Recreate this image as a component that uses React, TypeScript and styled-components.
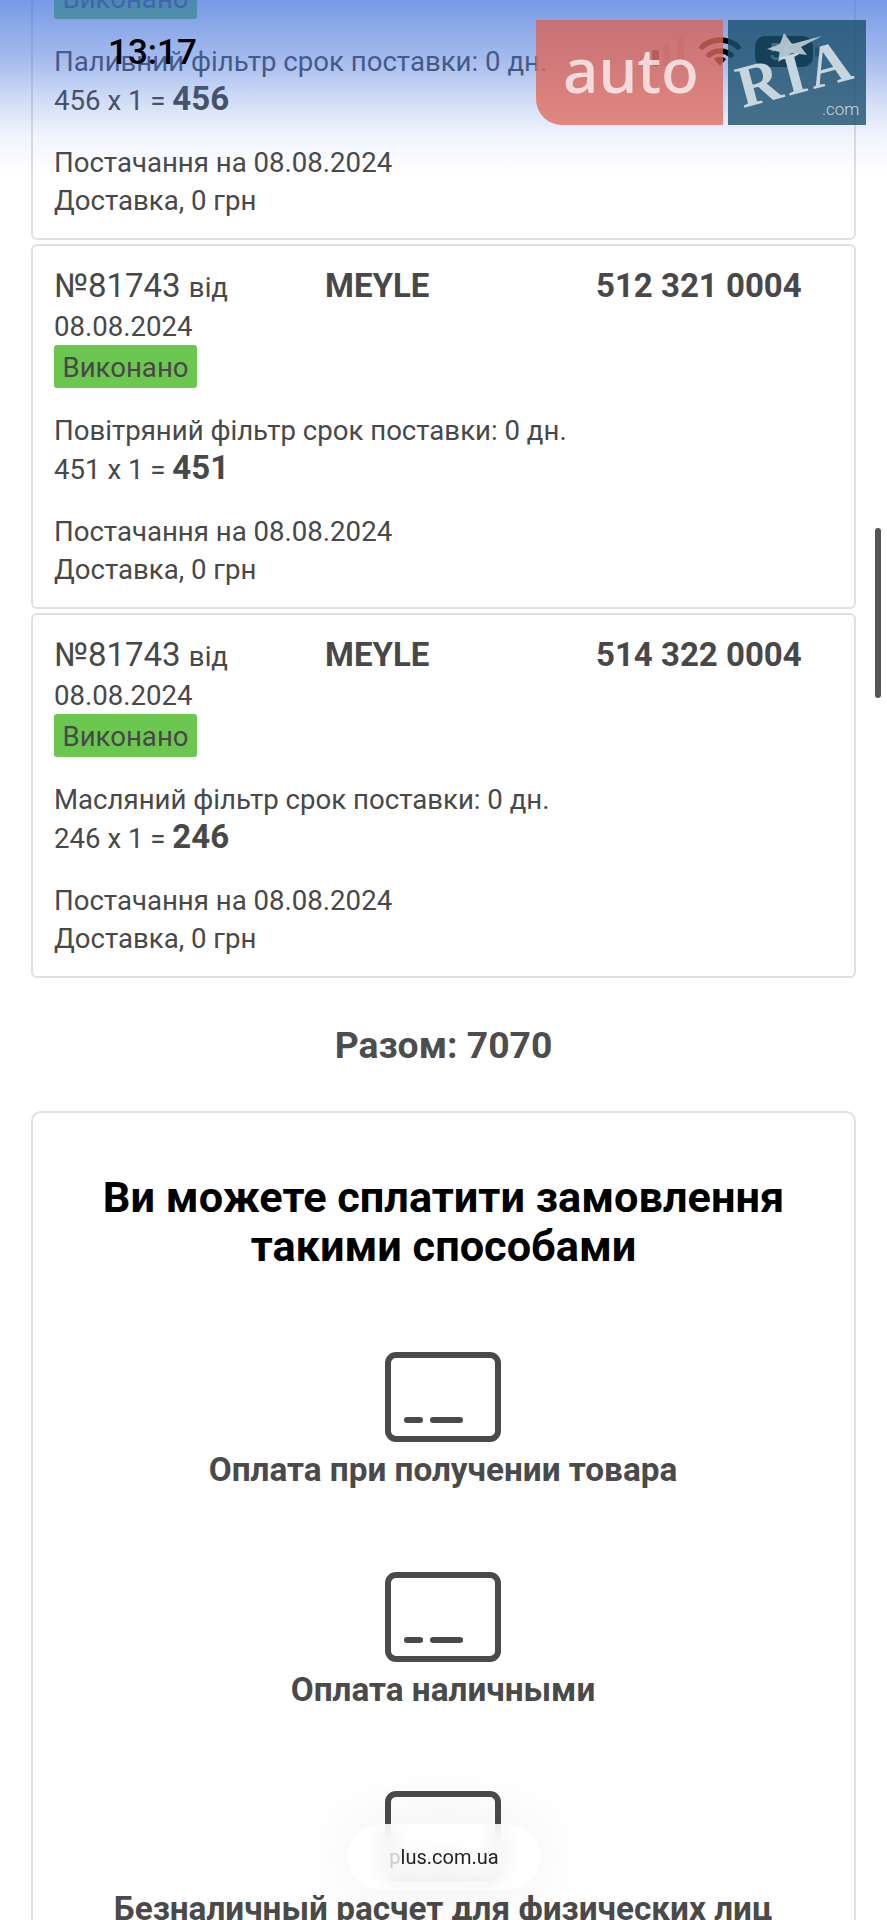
import styled, { createGlobalStyle } from "styled-components";

const GlobalStyle = createGlobalStyle`
  html, body {
    margin: 0;
    padding: 0;
    background: #fff;
    overflow: hidden;
  }
  * { box-sizing: border-box; }
`;

const Screen = styled.div`
  position: relative;
  width: 887px;
  height: 1920px;
  overflow: hidden;
  font-family: Roboto, "Noto Sans", sans-serif;
  color: #484848;
`;

const Content = styled.main`
  display: flex;
  flex-direction: column;
  gap: 4px;
  padding: 0 31px;
  margin-top: -125px;
`;

const OrderCard = styled.article`
  height: 365px;
  border: 2px solid #e0e0e0;
  border-radius: 6px;
  padding: 18px 21px 0;
  font-size: 27.6px;
  line-height: 38px;
`;

const OrderHead = styled.div`
  display: grid;
  grid-template-columns: 271px 271px 1fr;
  font-size: 33px;
  line-height: 44px;
`;

const Small = styled.span`
  font-size: 27.6px;
  line-height: 1;
`;

const Strong = styled.span`
  font-size: 33px;
  font-weight: 700;
  line-height: 1;
`;

const HeadStrong = styled.div`
  font-weight: 700;
`;

const OrderDate = styled.div`
  line-height: 36px;
  padding-top: 1px;
`;

const Status = styled.div`
  width: 143px;
  height: 43px;
  background: #6cc750;
  border-radius: 3px;
  text-align: center;
  line-height: 46px;
  margin-bottom: 24px;
`;

const Block = styled.div`
  margin-bottom: 24px;
`;

const PriceRow = styled.div`
  margin-top: 1px;
`;

const Total = styled.h2`
  margin: 41px 0 40px;
  text-align: center;
  font-size: 37.3px;
  line-height: 44px;
  font-weight: 700;
  color: #4d4d4d;
`;

const PayCard = styled.section`
  border: 2px solid #e0e0e0;
  border-radius: 10px;
  padding: 60px 10px 0;
  height: 900px;
`;

const PayTitle = styled.h1`
  margin: 0 0 81px;
  text-align: center;
  color: #000;
  font-size: 43.3px;
  line-height: 49px;
  font-weight: 700;
`;

const PayList = styled.div`
  display: flex;
  flex-direction: column;
  gap: 81.5px;
  padding-right: 1px;
`;

const PayItem = styled.div`
  display: flex;
  flex-direction: column;
  align-items: center;
  gap: 8px;
  font-size: 33.3px;
  line-height: 40px;
  font-weight: 700;
  color: #4a4a4a;
`;

const TopShade = styled.div`
  position: absolute;
  left: 0;
  right: 0;
  top: 0;
  height: 176px;
  background: linear-gradient(
    180deg,
    rgba(64, 112, 218, 0.71) 0%,
    rgba(64, 112, 218, 0.47) 34%,
    rgba(64, 112, 218, 0.24) 57%,
    rgba(64, 112, 218, 0.07) 78%,
    rgba(64, 112, 218, 0) 100%
  );
`;

const Clock = styled.div`
  position: absolute;
  left: 108px;
  top: 33px;
  font-size: 35px;
  line-height: 40px;
  font-weight: 500;
  color: #000;
`;

const StatusIcons = styled.svg`
  position: absolute;
  left: 630px;
  top: 30px;
`;

const BatteryLevel = styled.text`
  font-family: Roboto, sans-serif;
  font-size: 24px;
  font-weight: 500;
  fill: #d8dde0;
`;

const AutoLogo = styled.div`
  position: absolute;
  left: 536px;
  top: 20px;
  width: 187px;
  height: 105px;
  padding-left: 3px;
  border-bottom-left-radius: 26px;
  background: linear-gradient(180deg, rgba(216, 100, 90, 0.8), rgba(224, 110, 97, 0.8));
  color: rgba(255, 255, 255, 0.72);
  font-family: "Noto Sans", sans-serif;
  font-size: 62px;
  font-weight: 500;
  line-height: 98px;
  text-align: center;
`;

const RiaLogo = styled.svg`
  position: absolute;
  left: 728px;
  top: 20px;
`;

const RiaWord = styled.text`
  font-family: "Liberation Serif", serif;
  font-weight: 700;
  font-size: 60px;
  letter-spacing: 3px;
  fill: #c7d6de;
`;

const RiaCom = styled.text`
  font-family: Roboto, sans-serif;
  font-weight: 300;
  font-size: 17px;
  fill: #c7d6de;
`;

const Scrollbar = styled.div`
  position: absolute;
  right: 6px;
  top: 528px;
  width: 6px;
  height: 170px;
  border-radius: 3px;
  background: #555;
`;

const UrlPill = styled.div`
  position: absolute;
  left: 348px;
  top: 1824px;
  width: 192px;
  height: 66px;
  border-radius: 33px;
  background: rgba(255, 255, 255, 0.82);
  backdrop-filter: blur(10px);
  box-shadow: 0 0 70px rgba(0, 0, 0, 0.07);
  text-align: center;
  font-size: 20px;
  line-height: 66px;
  color: #222;
`;

const FadedLetter = styled.span`
  color: #ccc;
`;

function CardIcon() {
  return (
    <svg width="116" height="90" viewBox="0 0 116 90" fill="none">
      <rect x="3" y="3" width="110" height="84" rx="8" stroke="#4a4a4a" strokeWidth="6" />
      <rect x="19" y="65" width="19" height="6" rx="3" fill="#4a4a4a" />
      <rect x="45" y="65" width="33" height="6" rx="3" fill="#4a4a4a" />
    </svg>
  );
}

const ORDERS = [
  { article: "512 321 0004", name: "Повітряний фільтр", price: "451" },
  { article: "514 322 0004", name: "Масляний фільтр", price: "246" },
];

const PAYMENTS = ["Оплата при получении товара", "Оплата наличными", "Безналичный расчет для физических лиц"];

function Order({ article, name, price }: { article: string; name: string; price: string }) {
  return (
    <OrderCard>
      <OrderHead>
        <div>
          №81743 <Small>від</Small>
        </div>
        <HeadStrong>MEYLE</HeadStrong>
        <HeadStrong>{article}</HeadStrong>
      </OrderHead>
      <OrderDate>08.08.2024</OrderDate>
      <Status>Виконано</Status>
      <Block>
        <div>{name} срок поставки: 0 дн.</div>
        <PriceRow>
          {price} x 1 = <Strong>{price}</Strong>
        </PriceRow>
      </Block>
      <div>Постачання на 08.08.2024</div>
      <div>Доставка, 0 грн</div>
    </OrderCard>
  );
}

export default function App() {
  return (
    <Screen>
      <GlobalStyle />
      <Content>
        <Order article="512 321 0004" name="Паливний фільтр" price="456" />
        {ORDERS.map((order) => (
          <Order key={order.article} {...order} />
        ))}
        <Total>Разом: 7070</Total>
        <PayCard>
          <PayTitle>
            Ви можете сплатити замовлення
            <br />
            такими способами
          </PayTitle>
          <PayList>
            {PAYMENTS.map((payment) => (
              <PayItem key={payment}>
                <CardIcon />
                {payment}
              </PayItem>
            ))}
          </PayList>
        </PayCard>
      </Content>

      <TopShade />
      <Clock>13:17</Clock>
      <StatusIcons width="195" height="45" viewBox="0 0 195 45" fill="none">
        <rect x="10" y="26" width="7" height="10" rx="2" fill="#000" opacity="0.12" />
        <rect x="22" y="20" width="7" height="16" rx="2" fill="#000" opacity="0.75" />
        <rect x="33" y="14" width="7" height="22" rx="2" fill="#000" opacity="0.15" />
        <rect x="47" y="8" width="7" height="28" rx="2" fill="#000" opacity="0.15" />
        <path d="M72 17a27 27 0 0 1 36 0" stroke="#000" strokeWidth="5.5" strokeLinecap="round" />
        <path d="M79 25a17 17 0 0 1 22 0" stroke="#000" strokeWidth="5.5" strokeLinecap="round" />
        <path d="M90 36l-6-7a9 9 0 0 1 12 0z" fill="#000" />
        <rect x="125" y="6" width="58" height="31" rx="10" fill="#000" />
        <path d="M185 17a5 5 0 0 1 0 10z" fill="#000" opacity="0.5" />
        <BatteryLevel x="139" y="30">56</BatteryLevel>
      </StatusIcons>
      <AutoLogo>auto</AutoLogo>
      <RiaLogo width="138" height="105" viewBox="0 0 138 105">
        <rect width="138" height="105" fill="#1c506e" opacity="0.8" />
        <path d="M56 13l8 11 30-8-21 11 6 8-15-2-14 9 2-10-13-3 13-5z" fill="#c7d6de" opacity="0.85" />
        <RiaWord transform="translate(15 88) rotate(-15)">RIA</RiaWord>
        <RiaCom x="94" y="95">.com</RiaCom>
      </RiaLogo>
      <Scrollbar />
      <UrlPill>
        <FadedLetter>p</FadedLetter>lus.com.ua
      </UrlPill>
    </Screen>
  );
}
